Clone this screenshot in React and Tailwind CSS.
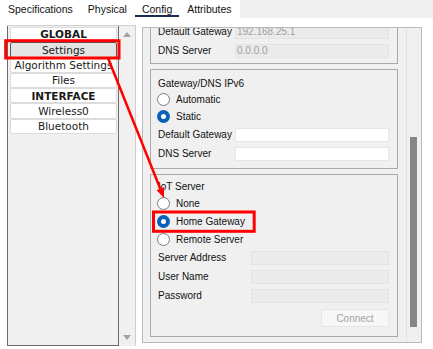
const listItems = [
  { label: 'GLOBAL', bold: true },
  { label: 'Settings', selected: true },
  { label: 'Algorithm Settings' },
  { label: 'Files' },
  { label: 'INTERFACE', bold: true },
  { label: 'Wireless0' },
  { label: 'Bluetooth' },
];

function Radio({ checked }) {
  if (checked) {
    return (
      <span className="w-[13px] h-[13px] rounded-full bg-[#0a62b8] flex items-center justify-center shrink-0">
        <span className="w-[5px] h-[5px] rounded-full bg-white" />
      </span>
    );
  }
  return <span className="w-[13px] h-[13px] rounded-full border border-[#7c7c7c] bg-white shrink-0" />;
}

function RadioRow({ label, checked, h = 'h-[17px]' }) {
  return (
    <div className={`${h} flex items-center gap-[6px] pl-[6px]`}>
      <Radio checked={checked} />
      <span>{label}</span>
    </div>
  );
}

function FieldRow({ label, value, disabled, labelW = 'w-[77px]' }) {
  return (
    <div className="h-[19px] flex items-center pl-[7px] pr-[8px]">
      <span className={`${labelW} shrink-0 whitespace-nowrap`}>{label}</span>
      <div
        className={
          disabled
            ? 'flex-1 h-[14px] bg-[#ebebeb] border border-[#e3e3e3] text-[#9c9c9c] pl-[1px] leading-[12px]'
            : 'flex-1 h-[14px] bg-white border border-[#e6e6e6]'
        }
      >
        {value}
      </div>
    </div>
  );
}

export default function App() {
  return (
    <div className="relative w-[433px] h-[349px] bg-white overflow-hidden text-[#111] font-['Liberation_Sans',Arial,sans-serif]">
      {/* tabs */}
      <div className="flex items-start h-[18px] pl-[1px] gap-[1px] text-[10.5px]">
        <div className="h-[17px] px-[7px] pt-[2px] leading-[14px]">Specifications</div>
        <div className="h-[17px] px-[7px] pt-[2px] leading-[14px]">Physical</div>
        <div className="h-[17px] px-[7px] pt-[2px] leading-[14px] border-b-2 border-[#1d2b4c]">Config</div>
        <div className="h-[17px] px-[7px] pt-[2px] leading-[14px]">Attributes</div>
        <div className="flex-1 h-[18px] bg-[#f0f0f0]" />
      </div>

      <div className="flex items-start">
        {/* left list */}
        <div className="ml-[7px] mt-[7px] w-[129px] h-[321px] flex border-t border-[#cfcfcf] font-['DejaVu_Sans',sans-serif] text-[10.5px] text-[#1a1a1a]">
          <div className="w-[112px] h-full bg-[#f0f0f0] border-l border-r border-b border-[#6b6b6b] pt-[1px] pl-[2px] pr-[1px] flex flex-col">
            {listItems.map((it) => (
              <div
                key={it.label}
                className={[
                  'h-[15.3px] flex items-center justify-center rounded-[2px] border leading-none',
                  it.selected ? 'bg-[#e4e4e4] border-[#555]' : 'bg-white border-[#dcdcdc]',
                  it.bold ? 'font-bold' : '',
                ].join(' ')}
              >
                {it.label}
              </div>
            ))}
          </div>
          <div className="w-[17px] h-full bg-[#f0f0f0] border-r border-[#cdcdcd] flex flex-col items-center justify-between pt-[6px] pb-[6px]">
            <svg width="8" height="5" viewBox="0 0 8 5">
              <path d="M4 0 L8 5 L0 5 Z" fill="#a3a3a3" />
            </svg>
            <svg width="8" height="5" viewBox="0 0 8 5">
              <path d="M0 0 L8 0 L4 5 Z" fill="#a3a3a3" />
            </svg>
          </div>
        </div>

        {/* right config panel */}
        <div className="ml-[6px] mt-[9px] w-[280px] h-[316px] flex bg-[#f0f0f0] border border-[#b9b9b9] text-[10px]">
          <div className="w-[263px] h-full overflow-hidden pl-[7px] pr-[8px]">
            <div className="mt-[-11px] border border-[#a9a9a9] pt-[4px] pb-[3px]">
              <div className="h-[19px] flex items-center pl-[7px] pr-[8px]">
                <span className="w-[77px] shrink-0 whitespace-nowrap">Default Gateway</span>
                <div className="flex-1 h-[14px] bg-[#ebebeb] border border-[#e3e3e3] text-[#a0a0a0] pl-[1px] leading-[12px]">
                  192.168.25.1
                </div>
              </div>
              <FieldRow label="DNS Server" value="0.0.0.0" disabled />
            </div>

            <div className="mt-[5px] border border-[#a9a9a9] pt-[5px] pb-[5px]">
              <div className="h-[16px] flex items-center pl-[7px]">Gateway/DNS IPv6</div>
              <RadioRow label="Automatic" />
              <RadioRow label="Static" checked />
              <FieldRow label="Default Gateway" />
              <FieldRow label="DNS Server" />
            </div>

            <div className="mt-[5px] border border-[#a9a9a9] pt-[4px] pb-[9px]">
              <div className="h-[15px] flex items-center pl-[7px]">IoT Server</div>
              <RadioRow label="None" h="h-[18px]" />
              <RadioRow label="Home Gateway" checked h="h-[18px]" />
              <RadioRow label="Remote Server" h="h-[18px]" />
              <FieldRow label="Server Address" disabled labelW="w-[93px]" />
              <FieldRow label="User Name" disabled labelW="w-[93px]" />
              <FieldRow label="Password" disabled labelW="w-[93px]" />
              <div className="flex justify-end pr-[8px] mt-[4px]">
                <div className="w-[68px] h-[18px] bg-[#f7f7f7] border border-[#e6e6e6] rounded-[2px] flex items-center justify-center text-[#a3a3a3]">
                  Connect
                </div>
              </div>
            </div>
          </div>
          <div className="flex-1 h-full border-l border-[#e2e2e2] pt-[109px] pl-[3px]">
            <div className="w-[7px] h-[190px] bg-[#868686]" />
          </div>
        </div>
      </div>

      {/* red annotation overlay */}
      <svg className="absolute inset-0 pointer-events-none" width="433" height="349" viewBox="0 0 433 349">
        <rect x="5.7" y="40.7" width="113.3" height="17.3" fill="none" stroke="#ff0000" strokeWidth="3" />
        <rect x="153.5" y="212" width="100.7" height="19.3" fill="none" stroke="#ff0000" strokeWidth="3" />
        <line x1="108" y1="58" x2="160.3" y2="188.7" stroke="#ff0000" strokeWidth="2.5" />
        <path d="M164 198 L156.6 190.2 L164 187.2 Z" fill="#ff0000" />
      </svg>
    </div>
  );
}
